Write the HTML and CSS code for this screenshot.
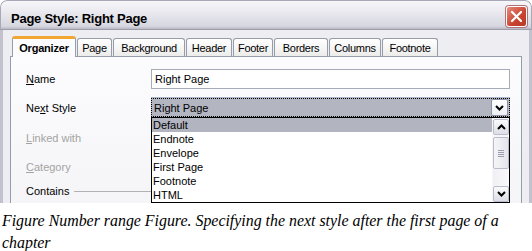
FILE: index.html
```html
<!DOCTYPE html>
<html>
<head>
<meta charset="utf-8">
<link rel="stylesheet" href="styles.css">
</head>
<body>
<div class="dialog">
  <div class="titlebar">
    <span class="title">Page Style: Right Page</span>
    <span class="close">
      <svg width="13" height="13" viewBox="0 0 13 13"><path d="M2 2 L11 11 M11 2 L2 11" stroke="#fff" stroke-width="2.2" stroke-linecap="round"/></svg>
    </span>
  </div>
  <div class="client">
    <div class="tabs">
      <div class="tab active t-org">Organizer</div>
      <div class="tab t-page">Page</div>
      <div class="tab t-bg">Background</div>
      <div class="tab t-head">Header</div>
      <div class="tab t-foot">Footer</div>
      <div class="tab t-bord">Borders</div>
      <div class="tab t-col">Columns</div>
      <div class="tab t-fn">Footnote</div>
    </div>
    <div class="panel">
      <div class="row">
        <span class="label"><u>N</u>ame</span>
        <div class="textbox">Right Page</div>
      </div>
      <div class="row">
        <span class="label">Ne<u>x</u>t Style</span>
        <div class="select">
          <span class="value">Right Page</span>
          <span class="dd-btn"><svg width="9" height="6" viewBox="0 0 9 6"><path d="M1 1 L4.5 4.5 L8 1" fill="none" stroke="#000" stroke-width="2"/></svg></span>
        </div>
      </div>
      <div class="row disabled linked">
        <span class="label"><u>L</u>inked with</span>
      </div>
      <div class="row disabled">
        <span class="label"><u>C</u>ategory</span>
      </div>
      <div class="row contains">
        <span class="label-inline">Contains</span>
        <span class="rule"></span>
      </div>
      <div class="popup">
        <ul class="items">
          <li class="sel">Default</li>
          <li>Endnote</li>
          <li>Envelope</li>
          <li>First Page</li>
          <li>Footnote</li>
          <li>HTML</li>
        </ul>
        <div class="scrollbar">
          <div class="sb-btn"><svg width="9" height="6" viewBox="0 0 9 6"><path d="M1 5 L4.5 1.5 L8 5" fill="none" stroke="#000" stroke-width="2"/></svg></div>
          <div class="sb-thumb"><span class="grip"></span><span class="grip"></span><span class="grip"></span><span class="grip"></span></div>
          <div class="sb-track"></div>
          <div class="sb-btn"><svg width="9" height="6" viewBox="0 0 9 6"><path d="M1 1 L4.5 4.5 L8 1" fill="none" stroke="#000" stroke-width="2"/></svg></div>
        </div>
      </div>
    </div>
  </div>
</div>
<p class="caption">Figure Number range Figure. Specifying the next style after the first page of a chapter</p>
</body>
</html>
```
FILE: styles.css
```css
* { box-sizing: border-box; }
html, body { margin: 0; padding: 0; background: #fff; }
body { width: 532px; font-family: "Liberation Sans", Arial, sans-serif; }

.dialog {
  width: 532px;
  height: 203px;
  overflow: hidden;
  border-radius: 7px 7px 0 0;
  background: #ececf0;
  display: flex;
  flex-direction: column;
}

.titlebar {
  height: 30px;
  flex: none;
  display: flex;
  align-items: center;
  justify-content: space-between;
  padding: 6px 4px 0 10px;
  background: linear-gradient(#f7f7fa 0%, #e9e9ef 40%, #d7d7e0 90%, #b9b9c6 100%);
  border: 1px solid #a8a8b6;
  border-bottom: 1px solid #9c9cab;
  border-radius: 7px 7px 0 0;
}
.title {
  font-weight: bold;
  font-size: 13px;
  letter-spacing: -0.25px;
  color: #000;
}
.close {
  width: 21px;
  height: 21px;
  margin-top: -4px;
  border: 1px solid #fff;
  border-radius: 3px;
  background: linear-gradient(135deg, #e88a7c, #c9432f 60%, #b53a28);
  box-shadow: 0 0 0 1px #b0727a;
  display: flex;
  align-items: center;
  justify-content: center;
}

.client {
  flex: 1;
  display: flex;
  flex-direction: column;
  padding: 6px 7px 0 7px;
  border-left: 3px solid #c2c2cf;
  border-right: 3px solid #c2c2cf;
  background: #eeeef2;
}

.tabs {
  height: 20px;
  display: flex;
  align-items: flex-end;
  gap: 1px;
  padding-left: 2px;
  font-size: 11px;
  letter-spacing: -0.3px;
  position: relative;
  z-index: 2;
}
.tab {
  height: 18px;
  display: flex;
  align-items: center;
  justify-content: center;
  border: 1px solid #959caa;
  border-bottom: none;
  border-radius: 3px 3px 0 0;
  background: linear-gradient(#ffffff, #ececeb);
  color: #000;
}
.tab.active {
  height: 21px;
  margin-bottom: -1px;
  background: #fcfcfe;
  font-weight: bold;
  letter-spacing: -0.2px;
  border-top: 3px solid #f0a732;
  border-color: #f0a732 #959caa #959caa #959caa;
  padding-top: 0;
}
.t-org { width: 64px; }
.t-page { width: 35px; }
.t-bg { width: 72px; }
.t-head { width: 46px; }
.t-foot { width: 40px; }
.t-bord { width: 54px; }
.t-col { width: 52px; }
.t-fn { width: 56px; }

.panel {
  flex: 1;
  position: relative;
  border: 1px solid #959caa;
  border-bottom: none;
  background: linear-gradient(#fcfcfe, #f5f5f7);
  padding: 12px 11px 0 15px;
  display: flex;
  flex-direction: column;
  gap: 9px;
  font-size: 11px;
  color: #000;
}

.row {
  height: 20px;
  display: flex;
  align-items: center;
}
.row.linked { margin-top: 1px; }
.row.contains { margin-top: -5px; }
.label { width: 125px; flex: none; }
.disabled .label { color: #a3a3a3; }

.textbox {
  flex: 1;
  height: 20px;
  border: 1px solid #a5acb8;
  background: #fff;
  padding-left: 3px;
  display: flex;
  align-items: center;
}
.select {
  flex: 1;
  height: 19px;
  align-self: flex-start;
  border: 1px dotted #000;
  background: #b3b5c0;
  padding-left: 2px;
  display: flex;
  align-items: center;
  justify-content: space-between;
  box-shadow: 0 -1px 0 #a9b8cc;
}
.dd-btn {
  width: 17px;
  height: 17px;
  margin-right: 1px;
  border: 1px solid #8d93a6;
  border-radius: 2px;
  background: linear-gradient(#ffffff, #eceef3);
  display: flex;
  align-items: center;
  justify-content: center;
}

.contains { gap: 5px; }
.rule {
  flex: 1;
  height: 1px;
  background: #b2b2b2;
  margin-top: 1px;
}

.popup {
  position: absolute;
  left: 140px;
  top: 60px;
  width: 359px;
  height: 86px;
  border: 1px solid #000;
  background: #fff;
  display: flex;
  z-index: 3;
}
.items {
  list-style: none;
  margin: 0;
  padding: 0;
  flex: 1;
}
.items li {
  height: 14px;
  line-height: 14px;
  padding-left: 1px;
}
.items li.sel { background: #b2b4bf; }

.scrollbar {
  width: 17px;
  display: flex;
  flex-direction: column;
  background: #f6f6f9;
  padding: 1px 0 0 1px;
}
.sb-btn {
  height: 16px;
  border: 1px solid #b8bccb;
  border-radius: 2px;
  background: linear-gradient(#fbfbfd, #dcdde6);
  display: flex;
  align-items: center;
  justify-content: center;
}
.sb-thumb {
  height: 32px;
  margin-top: 2px;
  border: 1px solid #b8bccb;
  border-radius: 2px;
  background: linear-gradient(90deg, #f5f5f8, #e4e5ec);
  display: flex;
  flex-direction: column;
  align-items: center;
  justify-content: center;
  gap: 1px;
}
.grip { width: 6px; height: 1px; background: #9a9eae; }
.sb-track { flex: 1; background: linear-gradient(90deg, #f0f0f4, #fafafc); }

.caption {
  margin: 0;
  padding: 7px 0 0 2px;
  font-family: "Liberation Serif", "Times New Roman", serif;
  font-style: italic;
  font-size: 15.9px;
  line-height: 22px;
  color: #000;
}
```
